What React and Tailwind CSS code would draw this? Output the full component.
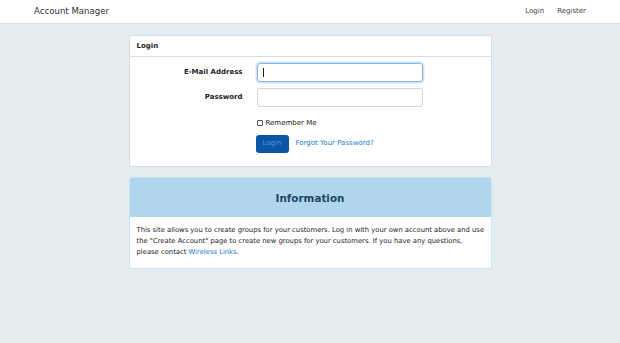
import React from 'react';

const font = { fontFamily: '"DejaVu Sans", Verdana, sans-serif' };

const Navbar = () => (
  <div className="h-[24px] bg-white border-b border-[#d6dfe6] flex items-center justify-between pl-[34px] pr-[34px]">
    <span className="text-[8.6px] text-[#333]">Account Manager</span>
    <div className="flex gap-[13px] text-[7px] text-[#444]">
      <span>Login</span>
      <span>Register</span>
    </div>
  </div>
);

const LoginCard = () => (
  <div className="bg-white border border-[#d5dde3] rounded-[2px]">
    <div className="h-[21px] flex items-center px-[7px] border-b border-[#d5dde3] text-[7px] font-bold text-[#222]">
      Login
    </div>
    <div className="pt-[6px] pb-[13px]">
      <div className="flex items-center h-[19px]">
        <label className="w-[113px] text-right text-[7px] font-bold text-[#222]">E-Mail Address</label>
        <div className="ml-[14px] w-[166px] h-[19px] rounded-[3px] border border-[#86b7e0] shadow-[0_0_0_1.5px_rgba(120,170,220,0.35)] flex items-center px-[5px]">
          <span className="w-px h-[9px] bg-[#222]" />
        </div>
      </div>
      <div className="flex items-center h-[19px] mt-[6px]">
        <label className="w-[113px] text-right text-[7px] font-bold text-[#222]">Password</label>
        <div className="ml-[14px] w-[166px] h-[19px] rounded-[3px] border border-[#cfd4d8]" />
      </div>
      <div className="flex items-center mt-[11px] ml-[127px]">
        <span className="w-[6px] h-[6px] border border-[#555] rounded-[1px]" />
        <span className="ml-[3px] text-[7px] text-[#222]">Remember Me</span>
      </div>
      <div className="flex items-center mt-[6px] ml-[126px]">
        <div className="w-[33px] h-[18px] rounded-[3px] bg-[#0b55a5] flex items-center justify-center text-[7px] text-[#5c98d6]">
          Login
        </div>
        <span className="ml-[7px] text-[7px] text-[#1a7ac9]">Forgot Your Password?</span>
      </div>
    </div>
  </div>
);

const InfoCard = () => (
  <div className="mt-[10px] bg-white border border-[#cde3f0] rounded-[2px] overflow-hidden">
    <div className="h-[39px] pt-[4px] bg-[#b0d6ee] flex items-center justify-center text-[10.4px] font-bold text-[#1d4566]">
      Information
    </div>
    <div className="px-[7px] pt-[8px] pb-[10px] text-[6.8px] leading-[11px] text-[#222] whitespace-nowrap">
      This site allows you to create groups for your customers. Log in with your own account above and use
      <br />
      the "Create Account" page to create new groups for your customers. If you have any questions,
      <br />
      please contact <span className="text-[#1a7ac9]">Wireless Links</span>.
    </div>
  </div>
);

const App = () => {
  return (
    <div className="min-h-[343px] bg-[#e6edf1]" style={font}>
      <Navbar />
      <div className="w-[363px] mx-auto pt-[11px]">
        <LoginCard />
        <InfoCard />
      </div>
    </div>
  );
};

export default App;
